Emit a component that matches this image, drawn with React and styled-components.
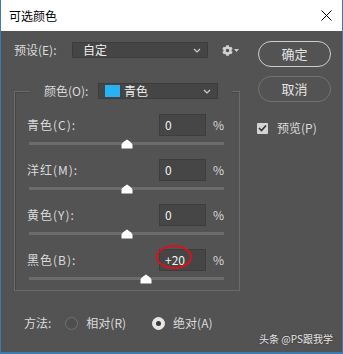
import React from 'react';
import styled, { createGlobalStyle } from 'styled-components';
import { FaCog } from 'react-icons/fa';

const GlobalStyle = createGlobalStyle`
  html, body {
    margin: 0;
    padding: 0;
    background: #ffffff;
  }
  * {
    box-sizing: border-box;
  }
`;

const Window = styled.div`
  width: 343px;
  height: 354px;
  display: flex;
  flex-direction: column;
  border-left: 1px solid #3b7bb3;
  border-right: 1px solid #3b7bb3;
  border-bottom: 2px solid #3b7bb3;
  font-family: "Noto Sans CJK SC", "Noto Sans", sans-serif;
  font-size: 12px;
  line-height: 16px;
`;

const TitleBar = styled.div`
  height: 31px;
  flex-shrink: 0;
  display: flex;
  align-items: center;
  justify-content: space-between;
  padding: 0 10px 0 8px;
  background: #ffffff;
  color: #000000;
`;

const Body = styled.div`
  position: relative;
  flex: 1;
  background: #535353;
  color: #dadada;
  padding: 10px 11px 0 13px;
`;

const Main = styled.div`
  display: flex;
  justify-content: space-between;
`;

const LeftCol = styled.div`
  width: 226px;
  display: flex;
  flex-direction: column;
`;

const PresetRow = styled.div`
  height: 16px;
  margin-top: 1px;
  display: flex;
  align-items: center;
`;

const Label = styled.span`
  width: ${({ $w }) => $w}px;
  flex-shrink: 0;
  white-space: nowrap;
`;

const Select = styled.div`
  width: ${({ $w }) => $w}px;
  height: 16px;
  display: flex;
  align-items: center;
  gap: 4px;
  padding: 0 6px 0 ${({ $pl }) => $pl}px;
  background: #454545;
  border: 1px solid #3c3c3c;
  color: #ececec;
  span {
    flex: 1;
  }
`;

const Gear = styled.div`
  margin-left: 14px;
  display: flex;
  align-items: center;
  gap: 1px;
  color: #d2d2d2;
`;

const Group = styled.div`
  margin-top: 33px;
  border: 1px solid #6a6a6a;
  box-shadow: inset 1px 1px 0 #474747;
  padding: 0 13px 3px 12px;
  display: flex;
  flex-direction: column;
  gap: 7px;
`;

const Legend = styled.div`
  align-self: flex-start;
  display: flex;
  align-items: center;
  margin: -9px 0 8px 3px;
  padding: 0 14px;
  background: #535353;
`;

const Swatch = styled.i`
  width: 15px;
  height: 12px;
  background: #27b2f2;
  flex-shrink: 0;
`;

const ColorRow = styled.div`
  display: flex;
  flex-direction: column;
`;

const RowTop = styled.div`
  height: 22px;
  display: flex;
  align-items: center;
`;

const RowLabel = styled.span`
  flex: 1;
  letter-spacing: 1px;
`;

const Field = styled.div`
  position: relative;
  width: 47px;
  height: 22px;
  display: flex;
  align-items: center;
  padding-left: 5px;
  background: #464646;
  border: 1px solid #3d3d3d;
  color: #f2f2f2;
`;

const Circle = styled.span`
  position: absolute;
  left: -4px;
  top: -5px;
  width: 36px;
  height: 24px;
  border: 2.5px solid #d3141c;
  border-radius: 50%;
`;

const Pct = styled.span`
  width: 13px;
  margin-left: 7px;
`;

const SliderArea = styled.div`
  height: 16px;
  padding: 6px 2px 0;
`;

const Track = styled.div`
  position: relative;
  height: 3px;
  background: #6c6c6c;
`;

const Thumb = styled.svg`
  position: absolute;
  top: -3px;
  margin-left: -6px;
`;

const RightCol = styled.div`
  width: 73px;
  display: flex;
  flex-direction: column;
  gap: 9px;
`;

const Button = styled.div`
  height: 26px;
  border-radius: 13px;
  display: flex;
  align-items: center;
  justify-content: center;
  border: ${({ $primary }) => ($primary ? '1.5px solid #cdcdcd' : '1px solid #727272')};
  color: #e4e4e4;
  font-size: 13px;
`;

const CheckRow = styled.div`
  margin: 9px 0 0 -1px;
  display: flex;
  align-items: center;
  gap: 9px;
`;

const CheckBox = styled.div`
  width: 11px;
  height: 11px;
  border-radius: 1px;
  background: #d4d4d4;
  display: flex;
  align-items: center;
  justify-content: center;
`;

const MethodRow = styled.div`
  margin-top: 24px;
  padding-left: 10px;
  height: 16px;
  display: flex;
  align-items: center;
`;

const Radio = styled.span`
  width: 13px;
  height: 13px;
  border-radius: 50%;
  display: flex;
  align-items: center;
  justify-content: center;
  margin: 0 8px 0 ${({ $ml }) => $ml}px;
  border: 1px solid ${({ $on }) => ($on ? '#e6e6e6' : '#737373')};
  background: ${({ $on }) => ($on ? '#e6e6e6' : '#4f4f4f')};
  &::after {
    content: '';
    display: ${({ $on }) => ($on ? 'block' : 'none')};
    width: 5px;
    height: 5px;
    border-radius: 50%;
    background: #3a3a3a;
  }
`;

const Watermark = styled.div`
  position: absolute;
  right: 9px;
  bottom: 5px;
  font-size: 10px;
  color: #e6e6e6;
  text-shadow: 0 0 2px #333;
`;

const Chevron = () => (
  <svg width="8" height="5" viewBox="0 0 8 5">
    <path d="M1 1l3 3 3-3" fill="none" stroke="#cfcfcf" strokeWidth="1.2" />
  </svg>
);

const rows = [
  { label: '青色(C):', value: 0 },
  { label: '洋红(M):', value: 0 },
  { label: '黄色(Y):', value: 0 },
  { label: '黑色(B):', value: 20, mark: true },
];

const App = () => {
  return (
    <>
      <GlobalStyle />
      <Window>
        <TitleBar>
          <span>可选颜色</span>
          <svg width="11" height="11" viewBox="0 0 11 11">
            <path d="M0.5 0.5l10 10M10.5 0.5l-10 10" stroke="#000" strokeWidth="1" />
          </svg>
        </TitleBar>
        <Body>
          <Main>
            <LeftCol>
              <PresetRow>
                <Label $w={58}>预设(E):</Label>
                <Select $w={136} $pl={10}>
                  <span>自定</span>
                  <Chevron />
                </Select>
                <Gear>
                  <FaCog size={11} />
                  <svg width="5" height="4" viewBox="0 0 5 4">
                    <path d="M0 1h5L2.5 4z" fill="#cfcfcf" />
                  </svg>
                </Gear>
              </PresetRow>
              <Group>
                <Legend>
                  <Label $w={54}>颜色(O):</Label>
                  <Select $w={120} $pl={6}>
                    <Swatch />
                    <span>青色</span>
                    <Chevron />
                  </Select>
                </Legend>
                {rows.map((r) => (
                  <ColorRow key={r.label}>
                    <RowTop>
                      <RowLabel>{r.label}</RowLabel>
                      <Field>
                        {r.value > 0 ? `+${r.value}` : r.value}
                        {r.mark && <Circle />}
                      </Field>
                      <Pct>%</Pct>
                    </RowTop>
                    <SliderArea>
                      <Track>
                        <Thumb
                          width="12"
                          height="10"
                          viewBox="0 0 12 10"
                          style={{ left: `${50 + r.value / 2}%` }}
                        >
                          <path d="M6 0.5C8 2 11.5 4 11.5 6V9.5H0.5V6C0.5 4 4 2 6 0.5Z" fill="#ffffff" />
                        </Thumb>
                      </Track>
                    </SliderArea>
                  </ColorRow>
                ))}
              </Group>
            </LeftCol>
            <RightCol>
              <Button $primary>确定</Button>
              <Button>取消</Button>
              <CheckRow>
                <CheckBox>
                  <svg width="9" height="8" viewBox="0 0 9 8">
                    <path d="M1 4l2.5 2.5L8 1.5" fill="none" stroke="#333" strokeWidth="1.6" />
                  </svg>
                </CheckBox>
                <span>预览(P)</span>
              </CheckRow>
            </RightCol>
          </Main>
          <MethodRow>
            <span>方法:</span>
            <Radio $ml={14} />
            <span>相对(R)</span>
            <Radio $on $ml={26} />
            <span>绝对(A)</span>
          </MethodRow>
          <Watermark>头条 @PS跟我学</Watermark>
        </Body>
      </Window>
    </>
  );
};

export default App;
